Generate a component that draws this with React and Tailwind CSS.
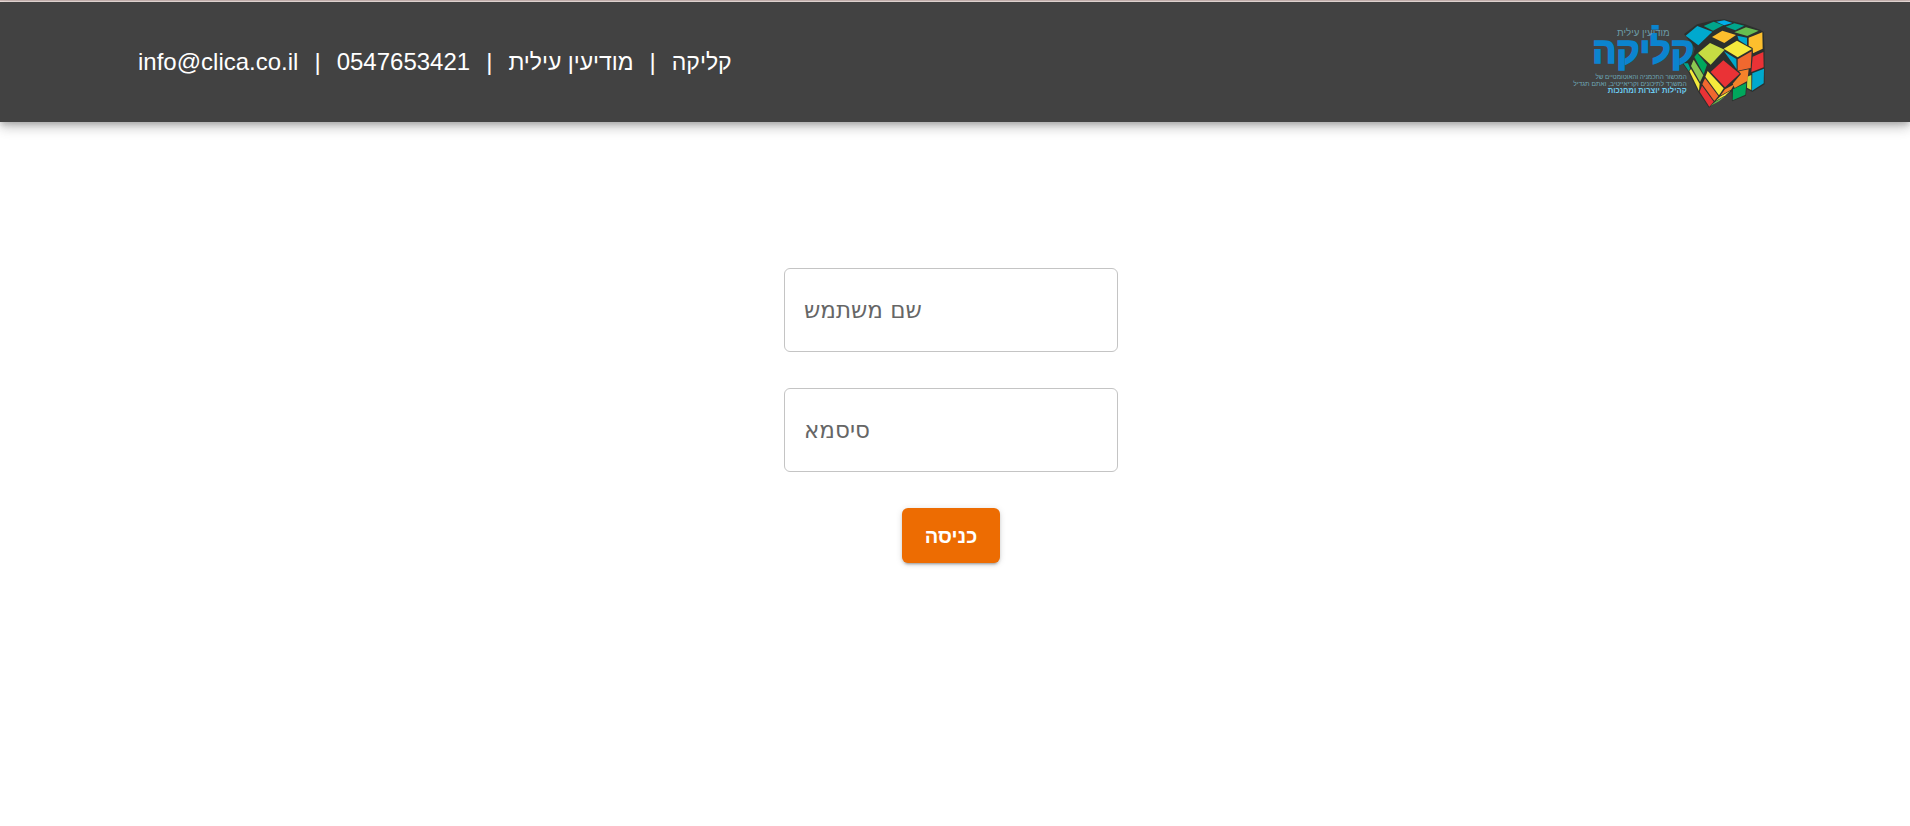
const TILES = [
  // top face
  ['377,107 412,78 457,95 415,136', '#00a9ce'],
  ['431,78 461,65 490,76 459,92', '#00a58c'],
  ['469,65 493,61 517,69 492,76', '#00aeea'],
  ['497,80 523,70 553,77 526,91', '#00a58c'],
  ['523,97 558,82 596,92 562,108', '#67bd50'],
  ['456,111 487,92 528,105 493,129', '#fdbf2d'],
  ['491,146 531,122 576,147 533,172', '#f5ea3c'],
  ['414,159 450,129 494,149 452,194', '#c6dc43'],
  ['452,216 490,181 539,221 495,262', '#ea3236'],
  // right face
  ['532,107 561,113 561,136 536,120', '#00a9ce'],
  ['566,113 607,97 608,146 579,160 578,144 566,137', '#fdbf2d'],
  ['578,170 610,156 611,202 574,216', '#ea3236'],
  ['577,220 612,206 611,250 576,272', '#00a9ce'],
  ['562,230 574,225 574,270 561,263', '#c6dc43'],
  ['492,154 529,177 530,208', '#00a9ce'],
  ['533,178 575,154 572,204 533,212', '#f0682f'],
  ['537,214 566,208 562,243 524,264 518,251 543,222', '#f5822a'],
  ['519,268 559,249 556,284 518,301', '#00a75c'],
  // left face
  ['403,171 412,160 441,194 431,223', '#00a75c'],
  ['393,198 401,179 430,226 420,246', '#8cc751'],
  ['388,213 393,207 419,251 417,273', '#f5ea3c'],
  ['370,190 384,190 391,206 386,213', '#00a58c'],
  ['436,230 443,213 491,265 477,286', '#f5ea3c'],
  ['427,253 435,235 475,288 463,303', '#f0682f'],
  ['419,275 426,257 461,305 448,320', '#ea3236'],
  // underside
  ['481,287 495,268 524,252 513,269', '#f5822a'],
  ['467,303 480,290 511,272 497,286', '#f5ea3c'],
  ['451,318 466,305 496,288 478,303', '#67bd50'],
]

function Logo() {
  return (
    <svg viewBox="36 48 600 276" className="h-[92px] w-[200px] shrink-0" role="img" aria-label="קליקה">
      <polygon
        points="372,102 411,73 461,61 493,58 555,73 600,89 611,96 614,155 614,253 577,276 560,267 558,287 516,304 515,274 447,323 415,276 384,214 367,190 400,163 405,145"
        fill="#2c302e"
      />
      {TILES.map(([points, fill]) => (
        <polygon key={points} points={points} fill={fill} />
      ))}
      <g fontFamily='"Liberation Sans", Arial, sans-serif' direction="rtl">
        <text x="402" y="188" fontSize="107" fontWeight="700" fill="#0b84cf" stroke="#0b84cf" strokeWidth="5">קליקה</text>
        <rect x="274" y="75" width="22" height="14" fill="#0b84cf" />
        <text x="329" y="109" fontSize="29" fill="#6c9ca6">מודיעין עילית</text>
        <text x="380" y="238" fontSize="19" fill="#6fa9b8">המכשור החכמניה והאוטומטיים של</text>
        <text x="380" y="259" fontSize="20" fill="#6fa9b8">המשרד לתיכונים וקריאייטיב, ואתם תגדיל</text>
        <text x="380" y="280" fontSize="23" fontWeight="700" fill="#6ccbef">קהילות יוצרות ומחנכות</text>
      </g>
    </svg>
  )
}

function Field({ id, label, type }) {
  return (
    <div className="relative w-[334px] max-w-full">
      <input
        id={id}
        type={type}
        className="block h-[84px] w-full rounded-[6px] border border-[#c4c4c4] bg-white px-5 text-2xl text-black/90 outline-none focus:border-[#1976d2]"
      />
      <label
        htmlFor={id}
        className="pointer-events-none absolute inset-y-0 left-5 flex items-center font-['DejaVu_Sans',sans-serif] text-[23px] text-[#666666]"
      >
        {label}
      </label>
    </div>
  )
}

const CONTACT = [
  { text: 'info@clica.co.il', href: 'mailto:info@clica.co.il' },
  { text: '0547653421' },
  { text: 'מודיעין עילית', hebrew: true },
  { text: 'קליקה', hebrew: true },
]

export default function App() {
  return (
    <div className="min-h-screen bg-white font-['Liberation_Sans',Arial,sans-serif]">
      <div className="h-[2px] border-b border-[#f0e3e0] bg-[#cdb9b6]" />
      <header className="flex h-[120px] items-center justify-between bg-[#424242] px-[138px] shadow-[0_3px_6px_-1px_rgba(0,0,0,0.2),0_6px_10px_rgba(0,0,0,0.14),0_1px_18px_rgba(0,0,0,0.12)]">
        <ul className="flex items-center text-2xl text-white">
          {CONTACT.map(({ text, href, hebrew }, i) => (
            <li key={text} className="flex items-baseline">
              {i > 0 && <span className="px-4">|</span>}
              {href ? <a href={href}>{text}</a> : <span className={hebrew ? 'text-[23px]' : ''}>{text}</span>}
            </li>
          ))}
        </ul>
        <Logo />
      </header>
      <main className="pt-[146px] pr-2">
        <form className="flex flex-col items-center gap-9" onSubmit={(e) => e.preventDefault()}>
          <Field id="username" label="שם משתמש" type="text" />
          <Field id="password" label="סיסמא" type="password" />
          <button
            type="submit"
            className="h-[55px] w-[98px] rounded-[6px] bg-[#ed6c02] text-xl font-bold text-white shadow-[0_4px_2px_-3px_rgba(0,0,0,0.2),0_2px_3px_rgba(0,0,0,0.14),0_1px_7px_rgba(0,0,0,0.12)]"
          >
            כניסה
          </button>
        </form>
      </main>
    </div>
  )
}
